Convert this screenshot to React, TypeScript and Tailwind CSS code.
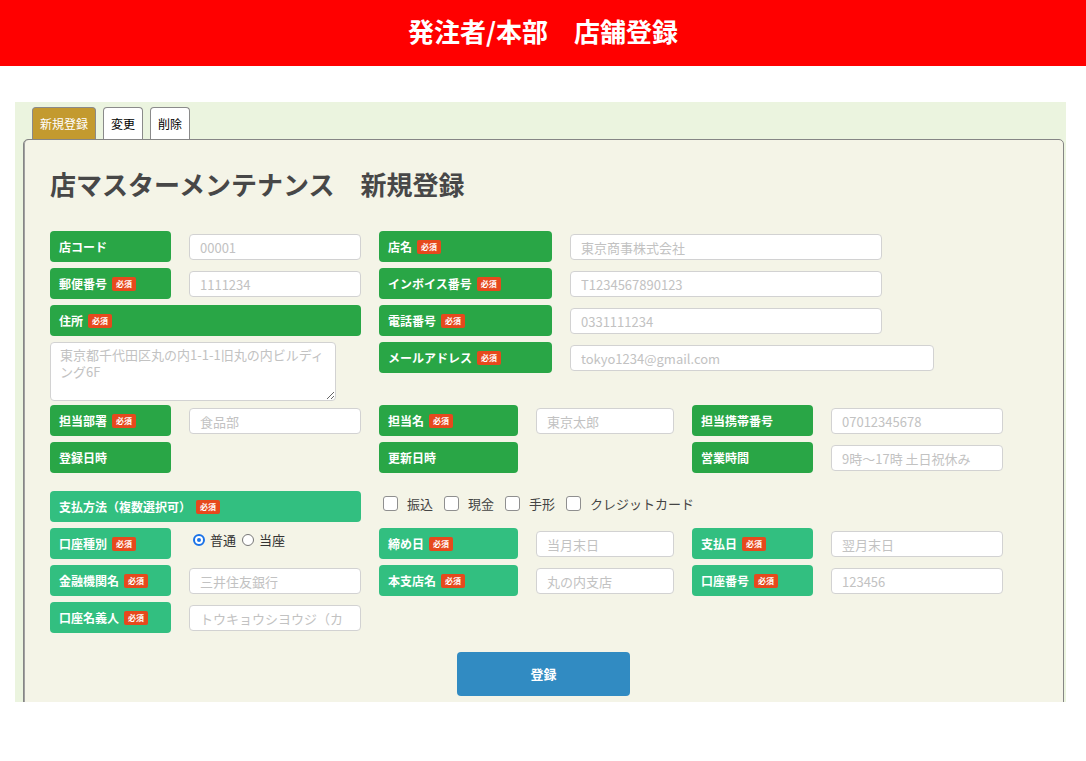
import React from 'react'

const jp = { fontFamily: '"Noto Sans CJK JP", "Liberation Sans", sans-serif' }

const Badge = () => (
  <span className="inline-flex h-[14px] w-[24px] items-center justify-center rounded-[2px] bg-[#e6491d] text-[8px] font-bold leading-none text-white">
    必須
  </span>
)

const Label = ({
  text,
  req,
  w,
  light,
}: {
  text: string
  req?: boolean
  w: string
  light?: boolean
}) => (
  <div
    className={`${w} ${
      light ? 'bg-[#32bf80]' : 'bg-[#29a646]'
    } flex h-[31px] shrink-0 items-center gap-[5px] rounded-[4px] px-[9px] text-[12px] font-bold text-white`}
  >
    <span>{text}</span>
    {req && <Badge />}
  </div>
)

const Field = ({ ph, w }: { ph: string; w: string }) => (
  <input
    readOnly
    placeholder={ph}
    className={`${w} mt-[3px] h-[26px] shrink-0 rounded-[4px] border border-[#d2d2d2] bg-white px-[10px] text-[13px] outline-none placeholder:text-[#c2c2c2]`}
    style={jp}
  />
)

const Check = ({ text }: { text: string }) => (
  <div className="flex items-center gap-[9px] text-[13px] text-[#444]">
    <span className="h-[15px] w-[15px] rounded-[3px] border border-[#8f8f8f] bg-white" />
    <span>{text}</span>
  </div>
)

const Radio = ({ text, on }: { text: string; on?: boolean }) => (
  <div className="flex items-center gap-[5px] text-[13px] text-[#333]">
    <span
      className={`flex h-[12px] w-[12px] items-center justify-center rounded-full bg-white ${
        on ? 'border-2 border-[#1b73e8]' : 'border border-[#777]'
      }`}
    >
      {on && <span className="h-[4px] w-[4px] rounded-full bg-[#1b73e8]" />}
    </span>
    <span>{text}</span>
  </div>
)

export default function App() {
  return (
    <div className="min-h-[761px] bg-white" style={jp}>
      <div className="flex h-[66px] items-center justify-center bg-[#ff0000] pb-[5px] text-[26px] font-bold text-white">
        発注者/本部　店舗登録
      </div>

      <div className="ml-[15px] mt-[36px] h-[600px] w-[1051px] overflow-hidden bg-[#ebf4df] pt-[5px]">
        <div className="ml-[17px] flex gap-[7px]">
          <div className="flex h-[32px] w-[64px] items-center justify-center rounded-t-[4px] border border-b-0 border-[#8a8a8a] bg-[#c39a2f] text-[12px] text-white">
            新規登録
          </div>
          <div className="flex h-[32px] w-[40px] items-center justify-center rounded-t-[4px] border border-b-0 border-[#8a8a8a] bg-white text-[12px] text-black">
            変更
          </div>
          <div className="flex h-[32px] w-[40px] items-center justify-center rounded-t-[4px] border border-b-0 border-[#8a8a8a] bg-white text-[12px] text-black">
            削除
          </div>
        </div>

        <div className="ml-[8px] w-[1041px] rounded-[5px] border border-[#858585] bg-[#f4f4e7] px-[26px] pb-[40px] pt-[26px] shadow-[inset_1px_0_0_#a0a0a0]">
          <h1 className="text-[26px] font-bold leading-[36px] text-[#474747]">
            店マスターメンテナンス　新規登録
          </h1>

          {/* upper two-column block */}
          <div className="mt-[29px] flex gap-[18px]">
            <div className="flex w-[311px] flex-col gap-[6px]">
              <div className="flex gap-[18px]">
                <Label text="店コード" w="w-[121px]" />
                <Field ph="00001" w="w-[172px]" />
              </div>
              <div className="flex gap-[18px]">
                <Label text="郵便番号" req w="w-[121px]" />
                <Field ph="1111234" w="w-[172px]" />
              </div>
              <Label text="住所" req w="w-[311px]" />
              <textarea
                readOnly
                placeholder="東京都千代田区丸の内1-1-1旧丸の内ビルディング6F"
                className="h-[59px] w-[286px] resize-y rounded-[4px] border border-[#d2d2d2] bg-white px-[9px] py-[3px] text-[13px] leading-[17px] outline-none placeholder:text-[#c2c2c2]"
                style={jp}
              />
            </div>
            <div className="flex flex-col gap-[6px]">
              <div className="flex gap-[18px]">
                <Label text="店名" req w="w-[173px]" />
                <Field ph="東京商事株式会社" w="w-[312px]" />
              </div>
              <div className="flex gap-[18px]">
                <Label text="インボイス番号" req w="w-[173px]" />
                <Field ph="T1234567890123" w="w-[312px]" />
              </div>
              <div className="flex gap-[18px]">
                <Label text="電話番号" req w="w-[173px]" />
                <Field ph="0331111234" w="w-[312px]" />
              </div>
              <div className="flex gap-[18px]">
                <Label text="メールアドレス" req w="w-[173px]" />
                <Field ph="tokyo1234@gmail.com" w="w-[364px]" />
              </div>
            </div>
          </div>

          {/* staff rows */}
          <div className="mt-[4px] flex flex-col gap-[6px]">
            <div className="flex gap-[18px]">
              <Label text="担当部署" req w="w-[121px]" />
              <Field ph="食品部" w="w-[172px]" />
              <Label text="担当名" req w="w-[139px]" />
              <Field ph="東京太郎" w="w-[138px]" />
              <Label text="担当携帯番号" w="w-[121px]" />
              <Field ph="07012345678" w="w-[172px]" />
            </div>
            <div className="flex gap-[18px]">
              <Label text="登録日時" w="w-[121px]" />
              <div className="w-[172px] shrink-0" />
              <Label text="更新日時" w="w-[139px]" />
              <div className="w-[138px] shrink-0" />
              <Label text="営業時間" w="w-[121px]" />
              <Field ph="9時～17時 土日祝休み" w="w-[172px]" />
            </div>
          </div>

          {/* payment rows */}
          <div className="mt-[18px] flex flex-col gap-[6px]">
            <div className="flex items-center gap-[22px]">
              <Label text="支払方法（複数選択可）" req light w="w-[311px]" />
              <div className="flex items-center gap-[11px] pb-[6px]">
                <Check text="振込" />
                <Check text="現金" />
                <Check text="手形" />
                <Check text="クレジットカード" />
              </div>
            </div>
            <div className="flex gap-[18px]">
              <Label text="口座種別" req light w="w-[121px]" />
              <div className="flex w-[172px] shrink-0 items-start gap-[6px] pl-[4px] pt-[2px]">
                <Radio text="普通" on />
                <Radio text="当座" />
              </div>
              <Label text="締め日" req light w="w-[139px]" />
              <Field ph="当月末日" w="w-[138px]" />
              <Label text="支払日" req light w="w-[121px]" />
              <Field ph="翌月末日" w="w-[172px]" />
            </div>
            <div className="flex gap-[18px]">
              <Label text="金融機関名" req light w="w-[121px]" />
              <Field ph="三井住友銀行" w="w-[172px]" />
              <Label text="本支店名" req light w="w-[139px]" />
              <Field ph="丸の内支店" w="w-[138px]" />
              <Label text="口座番号" req light w="w-[121px]" />
              <Field ph="123456" w="w-[172px]" />
            </div>
            <div className="flex gap-[18px]">
              <Label text="口座名義人" req light w="w-[121px]" />
              <Field ph="トウキョウシヨウジ（カ" w="w-[172px]" />
            </div>
          </div>

          <div className="mt-[19px] flex justify-center">
            <button className="h-[44px] w-[173px] rounded-[4px] bg-[#318bc2] text-[13px] font-bold text-white">
              登録
            </button>
          </div>
        </div>
      </div>
    </div>
  )
}
